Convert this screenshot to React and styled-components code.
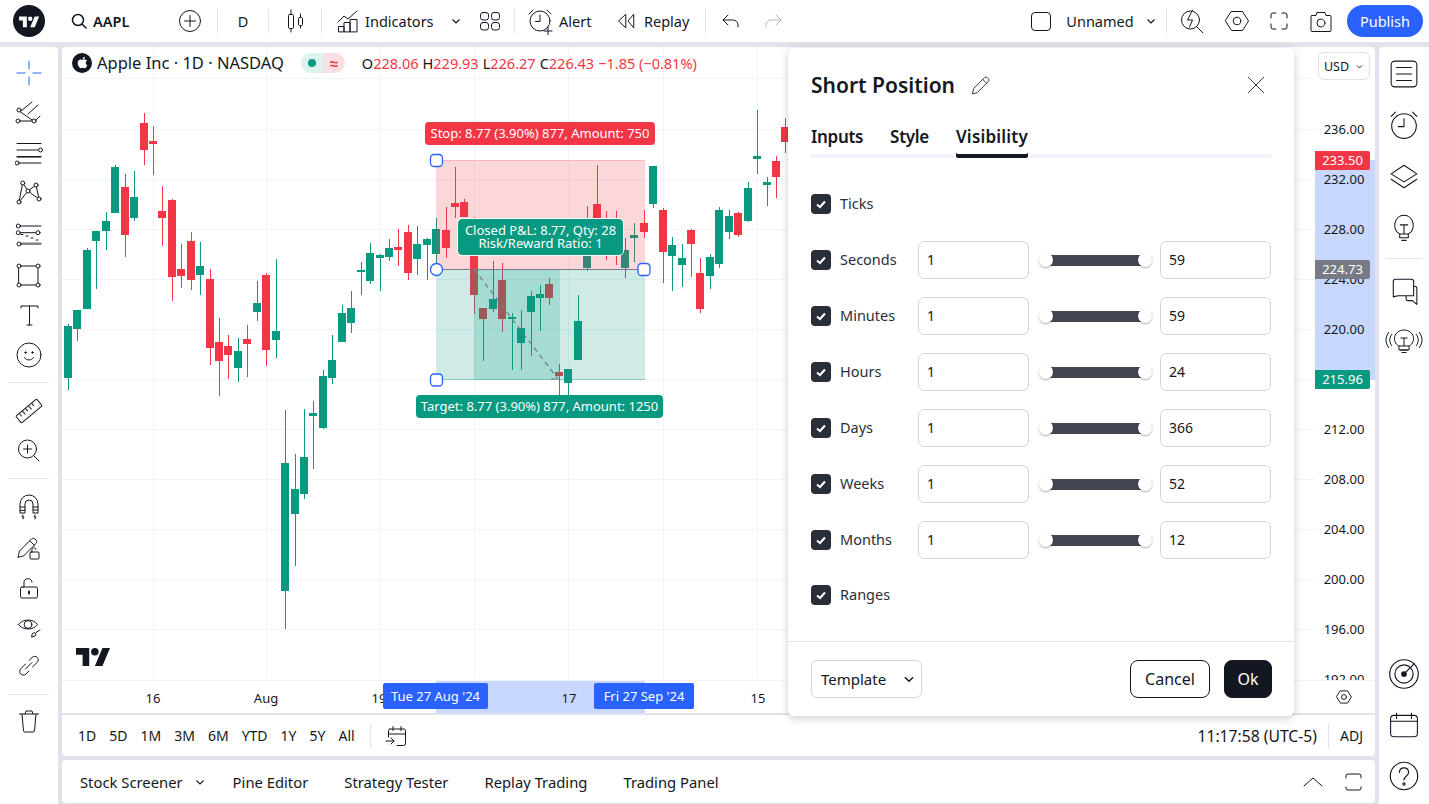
import React from "react";
import styled, { createGlobalStyle } from "styled-components";
import { FaApple } from "react-icons/fa";

const INK = "#131722";
const GREEN = "#089981";
const RED = "#f23645";
const BLUE = "#2962ff";
const LINE = "#e0e3eb";
const GRID = "#f0f3fa";

const GlobalStyle = createGlobalStyle`
  * { box-sizing: border-box; }
  html, body { margin: 0; height: 100%; overflow: hidden; }
  body {
    font-family: "Noto Sans", "Liberation Sans", sans-serif;
    color: ${INK};
    background: ${LINE};
  }
`;

const Page = styled.div`
  position: relative;
  display: grid;
  grid-template-rows: 42px 1fr;
  row-gap: 5px;
  height: 100vh;
  background: ${LINE};
`;

/* header */
const Header = styled.header`
  display: flex;
  align-items: center;
  background: #fff;
  font-size: 14.5px;
`;
const HeaderCell = styled.div`
  display: flex;
  align-items: center;
  justify-content: ${(p) => p.$justify || "center"};
  flex: none;
  height: 42px;
  width: ${(p) => p.$w}px;
  margin-left: ${(p) => p.$ml || 0}px;
  gap: ${(p) => p.$gap || 0}px;
  font-weight: ${(p) => p.$weight || 400};
`;
const IconWrap = styled.span`
  display: flex;
  flex: none;
  margin-left: ${(p) => p.$ml || 0}px;
`;
const HeaderSep = styled.div`
  flex: none;
  width: 1px;
  height: 24px;
  margin-left: ${(p) => p.$ml || 0}px;
  background: ${LINE};
`;
const PublishButton = styled.button`
  flex: none;
  width: 76px;
  height: 32px;
  margin-left: 6px;
  border: 0;
  border-radius: 16px;
  background: ${BLUE};
  color: #fff;
  font: inherit;
`;

/* body columns */
const Body = styled.div`
  display: grid;
  grid-template-columns: 58px 1fr 50px;
  column-gap: 4px;
  min-height: 0;
`;
const LeftBar = styled.aside`
  display: flex;
  flex-direction: column;
  align-items: center;
  padding-top: 6px;
  background: #fff;
  border-top-right-radius: 4px;
`;
const ToolSlot = styled.div`
  display: flex;
  align-items: center;
  justify-content: center;
  width: 100%;
  height: ${(p) => p.$h}px;
  flex: none;
`;
const ToolSep = styled.div`
  flex: none;
  width: 40px;
  height: 1px;
  margin: 7px 0 8px;
  background: ${LINE};
`;
const RightBar = styled.aside`
  display: flex;
  flex-direction: column;
  align-items: center;
  padding: 1px 0 3px;
  background: #fff;
  border-top-left-radius: 4px;
`;
const RightSlot = styled.div`
  display: flex;
  align-items: center;
  justify-content: center;
  flex: none;
  width: 100%;
  height: ${(p) => p.$h || 51}px;
`;
const RightSep = styled.div`
  flex: none;
  width: 36px;
  height: 1px;
  margin: 6px 0 7px;
  background: ${LINE};
`;
const RightSpacer = styled.div`
  flex: 1;
`;

const Center = styled.main`
  display: flex;
  flex-direction: column;
  gap: 4px;
  min-width: 0;
  padding-bottom: 1px;
`;
const ChartCard = styled.section`
  display: flex;
  flex-direction: column;
  flex: 1;
  min-height: 0;
  background: #fff;
  border-radius: 4px;
  overflow: hidden;
`;
const ChartRow = styled.div`
  display: flex;
  flex: 1;
  min-height: 0;
`;
const Pane = styled.div`
  position: relative;
  flex: 1;
  overflow: hidden;
`;
const PaneSvg = styled.svg`
  display: block;
`;

/* legend */
const Legend = styled.div`
  position: absolute;
  top: 0;
  left: 0;
  right: 0;
  height: 32px;
  display: flex;
  align-items: center;
  padding-left: 10px;
  border-bottom: 1px solid ${GRID};
`;
const AppleBadge = styled.span`
  display: inline-flex;
  align-items: center;
  justify-content: center;
  width: 20px;
  height: 20px;
  border-radius: 50%;
  background: ${INK};
  color: #fff;
  font-size: 13px;
`;
const LegendTitle = styled.span`
  margin-left: 5px;
  font-size: 16.5px;
  white-space: nowrap;
`;
const StatusPill = styled.span`
  display: inline-flex;
  width: 44px;
  height: 20px;
  margin-left: 17px;
  border-radius: 10px;
  overflow: hidden;
`;
const StatusHalf = styled.span`
  display: flex;
  align-items: center;
  justify-content: center;
  width: 50%;
  background: ${(p) => (p.$red ? "#fcdfe2" : "#dcf2ee")};
  color: ${RED};
  font-size: 15px;
  font-weight: 600;
`;
const StatusDot = styled.span`
  width: 8px;
  height: 8px;
  border-radius: 50%;
  background: ${GREEN};
`;
const Ohlc = styled.span`
  display: flex;
  margin-left: 17px;
  gap: 4px;
  font-size: 14.5px;
  white-space: nowrap;
`;
const OhlcValue = styled.span`
  color: ${RED};
`;

/* position tool labels */
const ToolTag = styled.div`
  position: absolute;
  left: ${(p) => p.$x - 62}px;
  top: ${(p) => p.$y - 47}px;
  width: ${(p) => p.$w}px;
  height: ${(p) => p.$h}px;
  display: flex;
  flex-direction: column;
  align-items: center;
  justify-content: center;
  border-radius: 4px;
  background: ${(p) => p.$bg};
  color: #fff;
  font-size: 13px;
  line-height: 13.5px;
  white-space: nowrap;
  ${(p) => p.$outlined && "outline: 1px solid #fff;"}
`;
const Watermark = styled.svg`
  position: absolute;
  left: 14px;
  top: 600px;
`;

/* price axis */
const PriceAxis = styled.div`
  position: relative;
  flex: none;
  width: 60px;
  overflow: hidden;
`;
const PriceBand = styled.div`
  position: absolute;
  left: 0;
  right: 0;
  top: 113px;
  height: 220px;
  background: #c8d7fd;
`;
const PriceTick = styled.div`
  position: absolute;
  left: 0;
  width: 58px;
  top: ${(p) => p.$y - 56}px;
  height: 18px;
  line-height: 18px;
  text-align: center;
  font-size: 13px;
`;
const PriceFlag = styled.div`
  position: absolute;
  left: 0;
  width: 55px;
  top: ${(p) => p.$y - 47}px;
  height: 19px;
  line-height: 19px;
  text-align: center;
  font-size: 13px;
  color: #fff;
  background: ${(p) => p.$bg};
  border-radius: 0 2px 2px 0;
`;
const CurrencyButton = styled.div`
  position: absolute;
  top: 5px;
  left: 3px;
  width: 52px;
  height: 28px;
  display: flex;
  align-items: center;
  justify-content: center;
  gap: 6px;
  border: 1px solid ${LINE};
  border-radius: 6px;
  background: #fff;
  font-size: 12.5px;
`;

/* time axis */
const TimeRow = styled.div`
  display: flex;
  flex: none;
  height: 33px;
  border-top: 1px solid ${GRID};
`;
const TimeTrack = styled.div`
  position: relative;
  flex: 1;
`;
const TimeBand = styled.div`
  position: absolute;
  left: 374px;
  width: 209px;
  top: 0;
  bottom: 0;
  background: #c8d7fd;
`;
const TimeTick = styled.span`
  position: absolute;
  left: ${(p) => p.$x - 62 - 20}px;
  width: 40px;
  top: 8px;
  text-align: center;
  font-size: 13px;
  line-height: 18px;
`;
const TimeFlag = styled.span`
  position: absolute;
  left: ${(p) => p.$x - 62}px;
  width: ${(p) => p.$w}px;
  top: 2px;
  height: 26px;
  line-height: 26px;
  text-align: center;
  font-size: 13px;
  color: #fff;
  background: ${BLUE};
  border-radius: 2px;
`;
const TimeCorner = styled.div`
  flex: none;
  width: 60px;
  display: flex;
  align-items: center;
  justify-content: center;
  padding-right: 2px;
`;

/* range row */
const RangeRow = styled.div`
  display: flex;
  flex: none;
  align-items: center;
  height: 43px;
  border-top: 2px solid ${LINE};
  padding-left: 16px;
  font-size: 14px;
`;
const RangeItem = styled.span`
  margin-right: ${(p) => p.$mr}px;
`;
const RangeSep = styled.div`
  flex: none;
  width: 1px;
  height: 24px;
  background: ${LINE};
  margin: ${(p) => p.$margin};
`;
const RangeClock = styled.span`
  margin-left: auto;
  font-size: 15.7px;
`;

/* bottom panel */
const BottomPanel = styled.section`
  display: flex;
  flex: none;
  align-items: center;
  height: 43px;
  padding-left: 18px;
  background: #fff;
  border-radius: 4px;
  font-size: 14.8px;
`;
const BottomTab = styled.span`
  display: inline-flex;
  align-items: center;
  margin-right: ${(p) => p.$mr || 36}px;
  white-space: nowrap;
`;
const BottomIcons = styled.div`
  display: flex;
  align-items: center;
  gap: 12px;
  margin-left: auto;
  padding-right: 8px;
`;

/* dialog */
const Dialog = styled.div`
  position: absolute;
  left: 788px;
  top: 48px;
  width: 506px;
  height: 668px;
  display: flex;
  flex-direction: column;
  background: #fff;
  border-radius: 6px;
  box-shadow: 0 2px 8px rgba(19, 23, 34, 0.22);
`;
const DialogHead = styled.div`
  display: flex;
  align-items: center;
  flex: none;
  height: 74px;
  padding: 0 23px;
`;
const DialogTitle = styled.h2`
  margin: 0 14px 0 0;
  font-size: 21px;
  font-weight: 600;
`;
const CloseIcon = styled.div`
  margin: 0 3px 0 auto;
  display: flex;
`;
const Tabs = styled.div`
  display: flex;
  flex: none;
  gap: 27px;
  height: 36px;
  margin: 0 22px 0 23px;
  box-shadow: inset 0 -4px 0 ${GRID};
  border-radius: 2px;
`;
const Tab = styled.div`
  height: 36px;
  padding-top: 3px;
  font-size: 17px;
  font-weight: 600;
  line-height: 24px;
  letter-spacing: -0.3px;
  ${(p) => p.$active && `box-shadow: inset 0 -4px 0 ${INK}; border-radius: 2px; letter-spacing: 0.2px;`}
`;
const Rows = styled.div`
  display: flex;
  flex-direction: column;
  flex: 1;
  gap: 18px;
  padding: 27px 22px 0 23px;
`;
const Row = styled.div`
  display: flex;
  align-items: center;
  height: 38px;
  &:last-child {
    margin-top: -1px;
  }
`;
const Check = styled.span`
  display: flex;
  align-items: center;
  justify-content: center;
  flex: none;
  width: 20px;
  height: 20px;
  border-radius: 4px;
  background: #2a2e39;
`;
const RowLabel = styled.span`
  flex: none;
  width: 78px;
  margin-left: 9px;
  padding-bottom: 2px;
  font-size: 14.5px;
  color: #2a2e39;
`;
const NumberField = styled.div`
  flex: none;
  width: 111px;
  height: 38px;
  padding-left: 8px;
  border: 1px solid #d1d4dc;
  border-radius: 6px;
  font-size: 14px;
  line-height: 36px;
`;
const Slider = styled.div`
  position: relative;
  flex: none;
  width: 131px;
  height: 11px;
`;
const SliderTrack = styled.div`
  position: absolute;
  left: 17px;
  right: 15px;
  top: 0;
  bottom: 0;
  background: #434651;
`;
const SliderKnob = styled.span`
  position: absolute;
  top: -2px;
  left: ${(p) => p.$left}px;
  width: 14px;
  height: 14px;
  border-radius: 50%;
  background: #fff;
  box-shadow: 0 1px 2px rgba(19, 23, 34, 0.35);
`;
const DialogFoot = styled.div`
  display: flex;
  align-items: center;
  flex: none;
  height: 75px;
  padding: 0 22px 0 23px;
  border-top: 1px solid ${LINE};
`;
const TemplateSelect = styled.div`
  display: flex;
  align-items: center;
  justify-content: space-between;
  width: 111px;
  height: 38px;
  padding: 0 5px 0 9px;
  border: 1px solid #d1d4dc;
  border-radius: 6px;
  font-size: 15px;
`;
const FootButton = styled.button`
  width: ${(p) => p.$w}px;
  height: 38px;
  margin-left: ${(p) => p.$ml}px;
  border: 1px solid ${INK};
  border-radius: 8px;
  background: ${(p) => (p.$solid ? INK : "#fff")};
  color: ${(p) => (p.$solid ? "#fff" : INK)};
  font: inherit;
  font-size: 16px;
`;

/* icons */
const Ico = ({ size = 28, sw = 1, color = INK, children, fill = "none" }) => (
  <svg
    width={size}
    height={size}
    viewBox="0 0 28 28"
    fill={fill}
    stroke={color}
    strokeWidth={sw}
    strokeLinecap="round"
    strokeLinejoin="round"
  >
    {children}
  </svg>
);
const Knot = ({ x, y, r = 2 }) => <circle cx={x} cy={y} r={r} fill="#fff" />;
const Chevron = ({ size = 12, color = INK }) => (
  <svg width={size} height={size} viewBox="0 0 12 12" fill="none" stroke={color} strokeWidth="1.2">
    <path d="M2.5 4.5 6 8l3.5-3.5" />
  </svg>
);
const LogoMark = () => (
  <>
    <path d="M14 20H7V8H0V1h14v19zM28 20h-8l8-19h8L28 20z" />
    <circle cx="20" cy="5" r="4" />
  </>
);
const HexIcon = ({ size = 28, sw = 1 }) => (
  <Ico size={size} sw={sw}>
    <path d="M8.5 4.5h11L25.5 14l-6 9.5h-11L2.5 14z" />
    <circle cx="14" cy="14" r="3.8" />
  </Ico>
);

const leftTools = [
  <Ico color={BLUE}><path d="M14 2v8M14 18v8M2 14h8M18 14h8" /></Ico>,
  <Ico>
    <path d="M6 12l11-9M13 15l10-9M5.5 13 17 21M5 22h12M21 21l4-4" />
    <Knot x={4} y={11} /><Knot x={3} y={22} /><Knot x={19} y={22} />
  </Ico>,
  <Ico>
    <path d="M2 3.5h24M2 10h21M2 16.5h24M4 23h22" />
    <path d="M2 17.5h24" stroke="#787b86" />
    <Knot x={25.5} y={10} /><Knot x={2} y={23} />
  </Ico>,
  <Ico>
    <path d="M4 22 7.7 3l5.3 8L21 5l3 14-11-8-9 11" />
    <Knot x={7.7} y={3} /><Knot x={21} y={5} /><Knot x={13} y={11} /><Knot x={24} y={19} /><Knot x={4} y={22} />
  </Ico>,
  <Ico>
    <path d="M5 6h21M5 12.7h16M6 24h20" />
    <path d="M6 14.5h2M11 16h2M16 18h2M21 20h2" strokeDasharray="2 2" />
    <path d="M6 23h20" stroke="#787b86" />
    <Knot x={3.3} y={6} /><Knot x={3.3} y={12.7} /><Knot x={4} y={24} /><Knot x={23} y={12.7} />
  </Ico>,
  <Ico>
    <path d="M4 5h19v19H4z" />
    <Knot x={4} y={5} /><Knot x={23} y={5} /><Knot x={4} y={24} /><Knot x={23} y={24} />
  </Ico>,
  <Ico><path d="M6 7V5h17v2M14.5 5v19M12 24h5" /></Ico>,
  <Ico>
    <circle cx="14" cy="14" r="12" />
    <circle cx="10.5" cy="11.5" r=".7" fill={INK} />
    <circle cx="17.5" cy="11.5" r=".7" fill={INK} />
    <path d="M9.5 16.5c1.5 3.4 7.5 3.4 9 0" />
  </Ico>,
  "sep",
  <Ico>
    <g transform="rotate(-40 14 14)">
      <rect x="0.5" y="9.5" width="27" height="9" rx="1" />
      <path d="M5 10v3M9 10v4M13 10v3M17 10v4M21 10v3" />
    </g>
  </Ico>,
  <Ico>
    <circle cx="12.5" cy="12" r="9" />
    <path d="M19 19l5 5M12.5 8v8M8.5 12h8" />
  </Ico>,
  "sep",
  <Ico>
    <path d="M5 17V11a9 9 0 0 1 18 0v6h-5v-6a4 4 0 0 0-8 0v6zM5 14h5M18 14h5M5 17v3h5v-3M18 17v3h5v-3" />
    <path d="M8 22l-1 2h2l-1 2M20 22l-1 2h2l-1 2" />
  </Ico>,
  <Ico>
    <path d="M3 24l1.5-6L16.5 6c1-1 2.5-1 3.5 0l1 1c1 1 1 2.5 0 3.500L9 22.500zM15 8l4.500 4.500" />
    <rect x="15" y="19" width="9" height="7" rx="1" fill="#fff" />
    <path d="M17 19v-2.5c0-2.5 4-2.5 4 0" />
  </Ico>,
  <Ico>
    <rect x="5.5" y="14" width="17" height="11" rx="1.5" />
    <path d="M9 14V9c0-4.5 8-4.5 8 0" />
    <path d="M14 18.5v2" strokeWidth="2" />
  </Ico>,
  <Ico>
    <path d="M3.5 11.5c4-6 15-6 19 0-4 6-15 6-19 0z" />
    <circle cx="13" cy="11.5" r="3.8" />
    <path d="M17 24l3-1 1-2-1.5-1.5-2 1zM21 19.5l4-2.5" />
  </Ico>,
  <Ico>
    <path d="M10.5 11 6 15.5c-3.5 3.5 1 9 5 5.5l3-3M17.5 14 22 9.5C25.5 6 21 1 17 4.5l-3 3M10.5 16l6.5-6.500" />
  </Ico>,
  "sep",
  <Ico>
    <path d="M4.5 5h19M10 5l1-3h6l1 3M7 5l1.5 17a1.5 1.5 0 0 0 1.5 1h8a1.5 1.5 0 0 0 1.5-1L21 5" />
  </Ico>,
];

const ohlc = [["O", "228.06"], ["H", "229.93"], ["L", "226.27"], ["C", "226.43"]];
const priceTicks = [
  ["236.00", 129], ["232.00", 179], ["228.00", 229], ["224.00", 279], ["220.00", 329],
  ["212.00", 429], ["208.00", 479], ["204.00", 529], ["200.00", 579], ["196.00", 629], ["192.00", 679],
];
const timeTicks = [["16", 153], ["Aug", 266], ["19", 379], ["17", 569], ["15", 758]];
const gridX = [153, 266, 379, 474, 568, 663, 757];
const gridY = [129, 179, 229, 279, 329, 379, 429, 479, 529, 579, 629, 679];
const ranges = ["1D", "5D", "1M", "3M", "6M", "YTD", "1Y", "5Y"];
const bottomTabs = ["Pine Editor", "Strategy Tester", "Replay Trading", "Trading Panel"];
const dialogRows = [
  ["Ticks"],
  ["Seconds", "1", "59"],
  ["Minutes", "1", "59"],
  ["Hours", "1", "24"],
  ["Days", "1", "366"],
  ["Weeks", "1", "52"],
  ["Months", "1", "12"],
  ["Ranges"],
];

// wickTop, wickBottom, bodyTop, bodyBottom, colour - read off the reference, one per bar
const candles = [
  [324, 390, 326, 378, "g"], [310, 341, 310, 329, "g"], [248, 309, 250, 309, "g"], [231, 289, 231, 241, "g"],
  [212, 250, 221, 231, "g"], [165, 213, 167, 213, "g"], [174, 257, 187, 235, "r"], [171, 221, 197, 218, "g"],
  [113, 165, 123, 150, "r"], [126, 175, 141, 144, "r"], [186, 246, 211, 218, "r"], [199, 301, 200, 277, "r"],
  [244, 288, 269, 276, "r"], [232, 290, 241, 280, "r"], [242, 295, 266, 275, "g"], [269, 365, 279, 348, "r"],
  [318, 396, 342, 361, "r"], [335, 379, 346, 355, "r"], [338, 382, 351, 368, "g"], [325, 377, 339, 344, "r"],
  [281, 321, 303, 312, "g"], [273, 366, 275, 350, "r"], [259, 358, 331, 340, "g"], [410, 629, 463, 591, "g"],
  [454, 566, 489, 514, "g"], [409, 499, 457, 494, "g"], [401, 469, 413, 416, "g"], [370, 429, 376, 428, "g"],
  [335, 384, 360, 378, "g"], [305, 342, 313, 342, "g"], [291, 333, 308, 323, "g"], [262, 295, 270, 272, "g"],
  [243, 284, 253, 281, "g"], [254, 291, 255, 258, "g"], [239, 261, 248, 257, "g"], [229, 266, 247, 250, "r"],
  [225, 280, 232, 273, "r"], [226, 275, 244, 259, "g"], [238, 280, 239, 245, "g"], [218, 265, 229, 254, "g"],
  [207, 258, 230, 248, "r"], [167, 218, 203, 207, "r"], [199, 217, 202, 217, "r"], [217, 314, 240, 295, "r"],
  [308, 361, 308, 319, "r"], [261, 312, 299, 309, "g"], [263, 332, 280, 319, "r"], [313, 370, 317, 319, "g"],
  [310, 370, 328, 343, "g"], [291, 356, 296, 312, "g"], [285, 331, 294, 298, "g"], [278, 305, 284, 298, "r"],
  [364, 395, 372, 376, "r"], [369, 395, 369, 383, "g"], [295, 360, 321, 360, "g"], [206, 271, 255, 268, "g"],
  [165, 245, 204, 240, "r"], [211, 260, 225, 245, "r"], [211, 265, 230, 245, "r"], [238, 278, 250, 268, "g"],
  [223, 262, 235, 238, "g"], [210, 238, 223, 232, "r"], [166, 208, 166, 204, "g"], [208, 283, 210, 252, "r"],
  [237, 291, 245, 256, "g"], [244, 287, 258, 265, "g"], [229, 277, 230, 244, "r"], [258, 313, 273, 309, "r"],
  [254, 289, 257, 276, "g"], [207, 268, 210, 264, "g"], [210, 239, 216, 232, "g"], [212, 237, 213, 235, "r"],
  [182, 222, 188, 221, "g"], [110, 174, 156, 159, "g"], [177, 206, 182, 185, "g"], [156, 198, 161, 177, "r"],
  [118, 153, 127, 142, "r"],
];

const Chart = () => (
  <PaneSvg width="1253" height="632" viewBox="62 47 1253 632" shapeRendering="crispEdges">
    {gridY.map((y) => (
      <rect key={y} x="62" y={y} width="1253" height="1" fill={GRID} />
    ))}
    {gridX.map((x) => (
      <rect key={x} x={x} y="47" width="1" height="632" fill={GRID} />
    ))}
    {candles.map(([wt, wb, bt, bb, c], i) => {
      const cx = Math.round(68 + 9.44 * i);
      const fill = c === "g" ? GREEN : RED;
      return (
        <g key={i} fill={fill}>
          <rect x={cx} y={wt} width="1" height={wb - wt} />
          <rect x={cx - 4} y={bt} width="8" height={bb - bt} />
        </g>
      );
    })}
    <rect x="436" y="160" width="209" height="109" fill={RED} fillOpacity=".2" />
    <rect x="436" y="269" width="209" height="111" fill={GREEN} fillOpacity=".2" />
    <rect x="474" y="269" width="86" height="111" fill={GREEN} fillOpacity=".2" />
    <rect x="436" y="160" width="209" height="1" fill={RED} fillOpacity=".2" />
    <rect x="436" y="379" width="209" height="1" fill={GREEN} fillOpacity=".3" />
    <rect x="436" y="269" width="209" height="1" fill="#787b86" />
    <g shapeRendering="geometricPrecision">
      <path d="M474 269 558 379M551 379h8" stroke="#787b86" strokeWidth="1.2" strokeDasharray="5 4" fill="none" />
      <rect x="430.5" y="154.5" width="12" height="12" rx="3.5" fill="#fff" stroke={BLUE} strokeWidth="1.3" />
      <rect x="430.5" y="374" width="12" height="12" rx="3.5" fill="#fff" stroke={BLUE} strokeWidth="1.3" />
      <rect x="638" y="263.5" width="12" height="12" rx="3.5" fill="#fff" stroke={BLUE} strokeWidth="1.3" />
      <circle cx="436.5" cy="269.5" r="6" fill="#fff" stroke={BLUE} strokeWidth="1.3" />
    </g>
  </PaneSvg>
);

export default function App() {
  let toolIndex = -1;
  return (
    <Page>
      <GlobalStyle />
      <Header>
        <HeaderCell $w={58}>
          <svg width="32" height="32" viewBox="0 0 32 32">
            <circle cx="16" cy="16" r="16" fill={INK} />
            <g transform="translate(6 11) scale(.56)" fill="#fff">
              <LogoMark />
            </g>
          </svg>
        </HeaderCell>
        <HeaderCell $w={114} $justify="flex-start" $gap={4} $weight={600}>
          <IconWrap $ml={11}>
            <svg width="20" height="20" viewBox="0 0 20 20" fill="none" stroke={INK} strokeWidth="1.5">
              <circle cx="9" cy="9" r="5.5" />
              <path d="M13 13l4.5 4.5" />
            </svg>
          </IconWrap>
          AAPL
        </HeaderCell>
        <HeaderCell $w={36}>
          <Ico>
            <circle cx="14" cy="14" r="10.5" />
            <path d="M14 8.5v11M8.5 14h11" />
          </Ico>
        </HeaderCell>
        <HeaderSep $ml={9} />
        <HeaderCell $w={50}>D</HeaderCell>
        <HeaderSep />
        <HeaderCell $w={52}>
          <Ico>
            <rect x="7.5" y="7.5" width="5" height="14" rx="1" />
            <path d="M10 3v4.5M10 21.5V25" />
            <rect x="17.5" y="10.5" width="4" height="8" rx="1" />
            <path d="M19.5 7v3.5M19.5 18.5V21" />
          </Ico>
        </HeaderCell>
        <HeaderSep />
        <HeaderCell $w={124} $justify="flex-start" $gap={3}>
          <IconWrap $ml={12}>
            <Ico>
              <path d="M4.5 24.5v-5H10v5zM10 24.5v-9h6v9zM16 24.5v-12h7v12z" />
              <path d="M4 15l6-6 4 3 9-8" />
            </Ico>
          </IconWrap>
          Indicators
        </HeaderCell>
        <HeaderCell $w={20}><Chevron /></HeaderCell>
        <HeaderCell $w={48}>
          <Ico>
            <rect x="4.5" y="5.5" width="8" height="7.5" rx="2.5" />
            <rect x="15.5" y="5.5" width="8" height="7.5" rx="2.5" />
            <rect x="4.5" y="15.5" width="8" height="7.5" rx="2.5" />
            <rect x="15.5" y="15.5" width="8" height="7.5" rx="2.5" />
          </Ico>
        </HeaderCell>
        <HeaderSep />
        <HeaderCell $w={86} $justify="flex-start" $gap={5}>
          <IconWrap $ml={11}>
            <Ico>
              <circle cx="14" cy="14" r="10" />
              <path d="M14 8v6.5H9.5M3 7l4-4M25 7l-4-4M18 24h8M22 20v8" />
            </Ico>
          </IconWrap>
          Alert
        </HeaderCell>
        <HeaderCell $w={104} $justify="flex-start" $gap={4}>
          <IconWrap $ml={11}>
            <Ico>
              <path d="M13.5 7.5 6.5 14l7 6.5zM21.5 7.5 16 14l5.5 6.5z" />
            </Ico>
          </IconWrap>
          Replay
        </HeaderCell>
        <HeaderSep />
        <HeaderCell $w={50}>
          <Ico>
            <path d="M11 8l-5 5 5 5M6 13h10a5 5 0 0 1 5 5v2" />
          </Ico>
        </HeaderCell>
        <HeaderCell $w={34}>
          <Ico color="#b2b5be">
            <path d="M17 8l5 5-5 5M22 13H12a5 5 0 0 0-5 5v2" />
          </Ico>
        </HeaderCell>
        <HeaderCell $w={26} $ml={238}>
          <svg width="22" height="21" viewBox="0 0 22 21" fill="none" stroke={INK}>
            <rect x="1.5" y="1.5" width="19" height="18" rx="3.5" />
          </svg>
        </HeaderCell>
        <HeaderCell $w={86} $ml={3}>Unnamed</HeaderCell>
        <HeaderCell $w={20} $ml={-2}><Chevron /></HeaderCell>
        <HeaderSep $ml={5} />
        <HeaderCell $w={50}>
          <Ico>
            <circle cx="12.5" cy="13" r="9" />
            <path d="M19 20l6 6M14.5 3 9.5 13h5l-3 7" fill="#fff" />
          </Ico>
        </HeaderCell>
        <HeaderCell $w={40}><HexIcon /></HeaderCell>
        <HeaderCell $w={44}>
          <Ico>
            <path d="M6 11V8a2 2 0 0 1 2-2h3M17 6h3a2 2 0 0 1 2 2v3M22 17v3a2 2 0 0 1-2 2h-3M11 22H8a2 2 0 0 1-2-2v-3" />
          </Ico>
        </HeaderCell>
        <HeaderCell $w={40}>
          <Ico>
            <path d="M5 8.5h4l1-3h8l1 3h4a1 1 0 0 1 1 1v14a1 1 0 0 1-1 1H5a1 1 0 0 1-1-1v-14a1 1 0 0 1 1-1z" />
            <circle cx="14" cy="16" r="4" />
          </Ico>
        </HeaderCell>
        <PublishButton>Publish</PublishButton>
      </Header>

      <Body>
        <LeftBar>
          {leftTools.map((t, i) => {
            if (t === "sep") return <ToolSep key={i} />;
            toolIndex += 1;
            return <ToolSlot key={i} $h={toolIndex < 8 ? 40.3 : 40}>{t}</ToolSlot>;
          })}
        </LeftBar>

        <Center>
          <ChartCard>
            <ChartRow>
              <Pane>
                <Chart />
                <Legend>
                  <AppleBadge><FaApple /></AppleBadge>
                  <LegendTitle>Apple Inc · 1D · NASDAQ</LegendTitle>
                  <StatusPill>
                    <StatusHalf><StatusDot /></StatusHalf>
                    <StatusHalf $red>≈</StatusHalf>
                  </StatusPill>
                  <Ohlc>
                    {ohlc.map(([k, v]) => (
                      <span key={k}>{k}<OhlcValue>{v}</OhlcValue></span>
                    ))}
                    <OhlcValue>−1.85 (−0.81%)</OhlcValue>
                  </Ohlc>
                </Legend>
                <ToolTag $x={425} $y={122} $w={230} $h={23} $bg={RED}>Stop: 8.77 (3.90%) 877, Amount: 750</ToolTag>
                <ToolTag $x={458} $y={219} $w={165} $h={36} $bg={GREEN} $outlined>
                  <span>Closed P&amp;L: 8.77, Qty: 28</span>
                  <span>Risk/Reward Ratio: 1</span>
                </ToolTag>
                <ToolTag $x={416} $y={395} $w={247} $h={23} $bg={GREEN}>Target: 8.77 (3.90%) 877, Amount: 1250</ToolTag>
                <Watermark width="34" height="20" viewBox="0 0 36 21" fill={INK}>
                  <LogoMark />
                </Watermark>
              </Pane>
              <PriceAxis>
                <PriceBand />
                {priceTicks.map(([t, y]) => (
                  <PriceTick key={t} $y={y}>{t}</PriceTick>
                ))}
                <PriceFlag $y={151} $bg={RED}>233.50</PriceFlag>
                <PriceFlag $y={260} $bg="#787b86">224.73</PriceFlag>
                <PriceFlag $y={370} $bg={GREEN}>215.96</PriceFlag>
                <CurrencyButton>USD <Chevron size={9} /></CurrencyButton>
              </PriceAxis>
            </ChartRow>
            <TimeRow>
              <TimeTrack>
                <TimeBand />
                {timeTicks.map(([t, x]) => (
                  <TimeTick key={t} $x={x}>{t}</TimeTick>
                ))}
                <TimeFlag $x={383} $w={105}>Tue 27 Aug '24</TimeFlag>
                <TimeFlag $x={594} $w={100}>Fri 27 Sep '24</TimeFlag>
              </TimeTrack>
              <TimeCorner><HexIcon size={18} sw={1.5} /></TimeCorner>
            </TimeRow>
            <RangeRow>
              {ranges.map((r) => (
                <RangeItem key={r} $mr={13}>{r}</RangeItem>
              ))}
              <RangeItem $mr={15}>All</RangeItem>
              <RangeSep $margin="0 12px 0 0" />
              <Ico>
                <path d="M7 7h14a1.5 1.5 0 0 1 1.5 1.5v13a2 2 0 0 1-2 2H14M5.5 15V8.5A1.5 1.5 0 0 1 7 7M5.5 12h17M10 4.5v4M18 4.5v4M3 19h8M8 16l3 3-3 3" />
              </Ico>
              <RangeClock>11:17:58 (UTC-5)</RangeClock>
              <RangeSep $margin="0 11px" />
              <RangeItem $mr={12}>ADJ</RangeItem>
            </RangeRow>
          </ChartCard>
          <BottomPanel>
            <BottomTab $mr={27}>Stock Screener<IconWrap $ml={11}><Chevron /></IconWrap></BottomTab>
            {bottomTabs.map((t) => (
              <BottomTab key={t}>{t}</BottomTab>
            ))}
            <BottomIcons>
              <Ico><path d="M5 18l9-8 9 8" /></Ico>
              <Ico>
                <path d="M7 10V8a2 2 0 0 1 2-2h11a2 2 0 0 1 2 2v2M22 19v1a2 2 0 0 1-2 2H9a2 2 0 0 1-2-2v-1" />
              </Ico>
            </BottomIcons>
          </BottomPanel>
        </Center>

        <RightBar>
          <RightSlot>
            <Ico size={30}>
              <rect x="2" y="2" width="24" height="24" rx="3.5" />
              <path d="M7 8h14M7 14h14M7 20h14" />
            </Ico>
          </RightSlot>
          <RightSlot>
            <Ico size={30}>
              <circle cx="14" cy="15" r="11.5" />
              <path d="M14 8v7.5H8.5M2 6l4-4M26 6l-4-4" />
            </Ico>
          </RightSlot>
          <RightSlot>
            <Ico size={30}><path d="M14 4l12 8-12 7.5L2 12zM2 17l12 8 12-8" /></Ico>
          </RightSlot>
          <RightSlot>
            <Ico size={30}>
              <path d="M10 20.5c-8-4-5-17.5 4-17.5s12 13.5 4 17.5zM10.5 24h7M12 26.5h4M10 20.5V24h8v-3.5M14 20.5V12M10.5 12h7" />
            </Ico>
          </RightSlot>
          <RightSep />
          <RightSlot $h={49}>
            <Ico size={30}>
              <path d="M4 19.5V5a2 2 0 0 1 2-2h15a2 2 0 0 1 2 2v13.5H8.5zM16 18.5v3a1.5 1.5 0 0 0 1.5 1.5H22l4 3.5V11.5a2 2 0 0 0-2-2h-1" />
            </Ico>
          </RightSlot>
          <RightSlot $h={49}>
            <svg width="38" height="30" viewBox="0 0 38 30" fill="none" stroke={INK}>
              <path d="M14 21c-8-4-5-16 5-16s13 12 5 16zM15 25h8M16.5 27.5h5M14 21v4h10v-4M19 21v-8M15.5 13h7" />
              <path d="M7 9c-3 4-3 8 0 12M4 7c-4 5-4 11 0 16M31 9c3 4 3 8 0 12M34 7c4 5 4 11 0 16" />
            </svg>
          </RightSlot>
          <RightSpacer />
          <RightSlot>
            <Ico size={32}>
              <circle cx="14" cy="14" r="12.5" />
              <circle cx="14" cy="14" r="8" />
              <circle cx="14" cy="14" r="2" fill={INK} />
              <path d="M14 14l9-9" />
            </Ico>
          </RightSlot>
          <RightSlot>
            <Ico size={30}>
              <rect x="1.5" y="5" width="25" height="20" rx="3" />
              <path d="M1.5 10.5h25M7 3v5M21 3v5" />
            </Ico>
          </RightSlot>
          <RightSlot>
            <Ico size={32}>
              <circle cx="14" cy="14" r="12" />
              <path d="M10 11c0-5.5 8-5.5 8 0 0 3-4 3-4 6.5" />
              <circle cx="14" cy="21" r="1" />
            </Ico>
          </RightSlot>
        </RightBar>
      </Body>

      <Dialog>
        <DialogHead>
          <DialogTitle>Short Position</DialogTitle>
          <Ico size={24}>
            <path d="M4 24l1.5-6L18 5.5c1-1 2.5-1 3.5 0l1 1c1 1 1 2.5 0 3.5L10 22.5zM16 7.5l4.5 4.5" />
          </Ico>
          <CloseIcon>
            <Ico size={24}><path d="M5 5l18 18M23 5 5 23" /></Ico>
          </CloseIcon>
        </DialogHead>
        <Tabs>
          <Tab>Inputs</Tab>
          <Tab>Style</Tab>
          <Tab $active>Visibility</Tab>
        </Tabs>
        <Rows>
          {dialogRows.map(([label, from, to]) => (
            <Row key={label}>
              <Check>
                <svg width="14" height="14" viewBox="0 0 14 14" fill="none" stroke="#fff" strokeWidth="2">
                  <path d="M3 7.5 6 10l5-5.5" />
                </svg>
              </Check>
              <RowLabel>{label}</RowLabel>
              {from && (
                <>
                  <NumberField>{from}</NumberField>
                  <Slider>
                    <SliderTrack />
                    <SliderKnob $left={10} />
                    <SliderKnob $left={109} />
                  </Slider>
                  <NumberField>{to}</NumberField>
                </>
              )}
            </Row>
          ))}
        </Rows>
        <DialogFoot>
          <TemplateSelect>Template <Chevron size={14} /></TemplateSelect>
          <FootButton $w={80} $ml={208}>Cancel</FootButton>
          <FootButton $w={48} $ml={14} $solid>Ok</FootButton>
        </DialogFoot>
      </Dialog>
    </Page>
  );
}
